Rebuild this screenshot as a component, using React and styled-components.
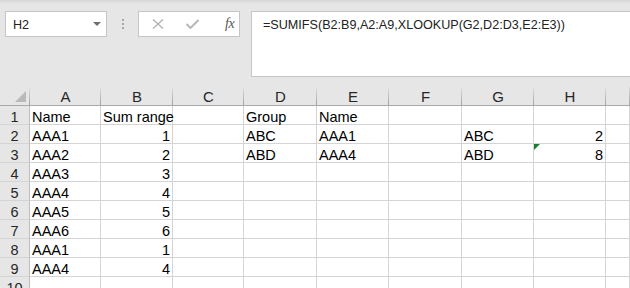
import styled, { createGlobalStyle } from 'styled-components';

const GlobalStyle = createGlobalStyle`
    html, body {
        margin: 0;
        padding: 0;
        background: #e6e6e6;
    }
    * {
        box-sizing: border-box;
    }
`;

const columns = ['A', 'B', 'C', 'D', 'E', 'F', 'G', 'H', ''];
const widths = [71, 72, 71, 73, 72, 73, 72, 72];

// each row: [A, B, C, D, E, F, G, H, I]
const rows = [
    ['Name', 'Sum range', '', 'Group', 'Name', '', '', '', ''],
    ['AAA1', 1, '', 'ABC', 'AAA1', '', 'ABC', 2, ''],
    ['AAA2', 2, '', 'ABD', 'AAA4', '', 'ABD', 8, ''],
    ['AAA3', 3, '', '', '', '', '', '', ''],
    ['AAA4', 4, '', '', '', '', '', '', ''],
    ['AAA5', 5, '', '', '', '', '', '', ''],
    ['AAA6', 6, '', '', '', '', '', '', ''],
    ['AAA1', 1, '', '', '', '', '', '', ''],
    ['AAA4', 4, '', '', '', '', '', '', ''],
    ['', '', '', '', '', '', '', '', ''],
];

export default function App() {
    return (
        <>
            <GlobalStyle />
            <Window>
                <TopBar>
                    <NameBox>
                        <span>H2</span>
                        <DropArrow />
                    </NameBox>
                    <Grip>
                        <i /><i /><i />
                    </Grip>
                    <FuncBox>
                        <svg width="12" height="10" viewBox="0 0 12 10">
                            <path d="M1 0.5 L11 9.5 M11 0.5 L1 9.5" stroke="#b0b0b0" strokeWidth="1.2" fill="none" />
                        </svg>
                        <svg width="13" height="10" viewBox="0 0 13 10">
                            <path d="M0.5 5 L4.5 9 L12.5 1" stroke="#b8b8b8" strokeWidth="2" fill="none" />
                        </svg>
                        <Fx>fx</Fx>
                    </FuncBox>
                    <FormulaBar>=SUMIFS(B2:B9,A2:A9,XLOOKUP(G2,D2:D3,E2:E3))</FormulaBar>
                </TopBar>
                <Sheet>
                    <Corner>
                        <svg width="11" height="11" viewBox="0 0 11 11">
                            <path d="M11 0 L11 11 L0 11 Z" fill="#b9b9b9" />
                        </svg>
                    </Corner>
                    {columns.map((c, i) => (
                        <ColHead key={c + i}>{c}</ColHead>
                    ))}
                    {rows.map((row, r) => (
                        <Row key={r} row={row} num={r + 1} />
                    ))}
                </Sheet>
            </Window>
        </>
    );
}

function Row({ row, num }) {
    return (
        <>
            <RowHead>{num}</RowHead>
            {row.map((v, i) => (
                <Cell key={i} numeric={typeof v === 'number'}>
                    {num === 3 && i === 7 && <ErrorMark />}
                    {v}
                </Cell>
            ))}
        </>
    );
}

const Window = styled.div`
    width: 630px;
    height: 288px;
    overflow: hidden;
    background: #e6e6e6;
    font-family: 'Liberation Sans', Arial, sans-serif;
`;

const TopBar = styled.div`
    height: 87px;
    display: flex;
    align-items: flex-start;
    padding: 11px 0 0 5px;
    background: linear-gradient(#d6d6d6, #e6e6e6 4px);
`;

const NameBox = styled.div`
    width: 102px;
    height: 26px;
    background: #fff;
    border: 1px solid #c6c6c6;
    display: flex;
    align-items: center;
    justify-content: space-between;
    padding: 1px 5px 0 7px;
    font-size: 12.6px;
    color: #222;
`;

const DropArrow = styled.div`
    width: 0;
    height: 0;
    border-left: 4px solid transparent;
    border-right: 4px solid transparent;
    border-top: 4px solid #6e6e6e;
    margin-top: -2px;
`;

const Grip = styled.div`
    width: 31px;
    display: flex;
    flex-direction: column;
    align-items: center;
    gap: 2px;
    padding-top: 8px;
    i {
        width: 2px;
        height: 2px;
        background: #a6a6a6;
    }
`;

const FuncBox = styled.div`
    width: 102px;
    height: 26px;
    background: #fff;
    border: 1px solid #c6c6c6;
    display: flex;
    align-items: center;
    padding: 0 0 0 13px;
    svg:nth-child(2) {
        margin-left: 22px;
    }
`;

const Fx = styled.span`
    margin-left: 26px;
    font-family: 'Liberation Serif', 'Times New Roman', serif;
    font-style: italic;
    font-size: 14px;
    color: #555;
    letter-spacing: -0.5px;
`;

const FormulaBar = styled.div`
    flex: 1;
    margin-left: 11px;
    height: 66px;
    background: #fff;
    border: 1px solid #c6c6c6;
    border-right: none;
    padding: 4px 0 0 11px;
    font-size: 12.6px;
    line-height: 18px;
    color: #222;
    white-space: nowrap;
`;

const Sheet = styled.div`
    display: grid;
    grid-template-columns: 30px ${widths.map(w => w + 'px').join(' ')} 1fr;
    grid-auto-rows: 19px;
    background: #fff;
`;

const HeadBase = styled.div`
    position: relative;
    background: #e6e6e6;
    border-bottom: 1px solid #a9a9a9;
    &::after {
        content: '';
        position: absolute;
        right: 0;
        top: 0;
        bottom: 0;
        width: 1px;
        background: linear-gradient(#dedede, #a3a3a3);
    }
`;

const Corner = styled(HeadBase)`
    display: flex;
    align-items: flex-end;
    justify-content: flex-end;
    padding: 0 4px 3px 0;
`;

const ColHead = styled(HeadBase)`
    text-align: center;
    font-size: 15px;
    line-height: 20px;
    color: #262626;
`;

const RowHead = styled.div`
    background: #e6e6e6;
    border-right: 1px solid #bdbdbd;
    border-bottom: 1px solid #d4d4d4;
    text-align: center;
    font-size: 14.5px;
    line-height: 22px;
    color: #262626;
    white-space: nowrap;
`;

const Cell = styled.div`
    position: relative;
    border-right: 1px solid #d4d4d4;
    border-bottom: 1px solid #d4d4d4;
    font-size: 14.5px;
    line-height: 22px;
    color: #000;
    white-space: nowrap;
    padding: 0 2px 0 2px;
    text-align: ${props => (props.numeric ? 'right' : 'left')};
`;

const ErrorMark = styled.span`
    position: absolute;
    left: 0;
    top: 0;
    width: 0;
    height: 0;
    border-top: 6px solid #1a7d32;
    border-right: 6px solid transparent;
`;
